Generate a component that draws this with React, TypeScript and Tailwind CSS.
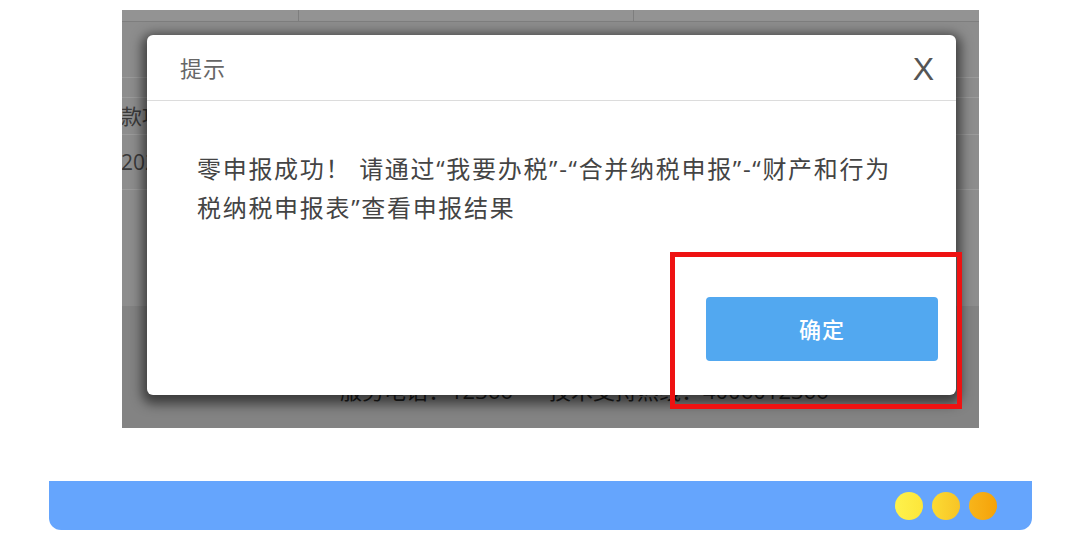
export default function App() {
  return (
    <div className="w-[1080px] h-[547px] bg-white overflow-hidden font-['Open_Sans','Noto_Sans_CJK_SC',sans-serif]">
      <div className="pt-[10px] pl-[122px]">
        <div className="relative w-[857px] h-[418px] bg-[#8d8d8d] overflow-hidden">
          {/* page behind the overlay */}
          <div className="flex flex-col h-full">
            <div className="h-[12px] border-b border-[#7e7e7e] bg-[#939393] flex">
              <div className="w-[177px] border-r border-[#7e7e7e]" />
              <div className="w-[335px] border-r border-[#7e7e7e]" />
            </div>
            <div className="h-[56px] border-b border-[#9b9b9b]" />
            <div className="h-[20px] border-b border-[#9b9b9b]" />
            <div className="h-[37px] border-b border-[#9b9b9b] flex items-center text-[21px] text-[#3a3a3a] leading-none">
              <span className="-ml-[1px]">款项</span>
            </div>
            <div className="h-[55px] border-b border-[#9b9b9b] flex items-center text-[21px] text-[#3a3a3a] leading-none">
              <span className="-ml-[1px]">2022</span>
            </div>
            <div className="h-[116px]" />
            <div className="flex-1 bg-[#838383] pt-[73px] pl-[218px] text-[22px] leading-none text-[#1e1e1e] flex gap-[36px]">
              <span>服务电话：12366</span>
              <span>技术支持热线：4006012366</span>
            </div>
          </div>

          {/* modal */}
          <div className="absolute left-[25px] top-[25px] w-[809px] h-[360px] bg-white rounded-[6px] shadow-[0_4px_12px_5px_rgba(0,0,0,0.55)] flex flex-col">
            <div className="h-[66px] border-b border-[#dcdcdc] flex items-center justify-between pl-[33px] pr-[22px]">
              <span className="text-[22px] tracking-[1px] text-[#666] leading-none">提示</span>
              <span className="font-['Liberation_Sans',sans-serif] text-[32px] text-[#555] leading-none pt-[2px]">X</span>
            </div>
            <div className="flex-1 flex flex-col pl-[50px] pr-[18px]">
              <div className="pt-[48px] text-[24px] tracking-[1.7px] leading-[39px] text-[#444] whitespace-nowrap">
                <div>零申报成功！ 请通过“我要办税”-“合并纳税申报”-“财产和行为</div>
                <div>税纳税申报表”查看申报结果</div>
              </div>
              <div className="flex justify-end mt-[70px]">
                <button className="w-[232px] h-[64px] rounded-[4px] bg-[#52a8f0] text-white text-[22px] tracking-[1px] font-medium">
                  确定
                </button>
              </div>
            </div>
          </div>

          {/* highlight box */}
          <div className="absolute left-[548px] top-[242px] w-[292px] h-[157px] border-[5px] border-[#ee1212]" />
        </div>
      </div>

      <div className="mt-[53px] ml-[49px] w-[983px] h-[49px] bg-[#65a5fd] rounded-b-[12px] flex items-center justify-end pr-[35px] gap-[9px]">
        <div className="w-[28px] h-[28px] rounded-full bg-gradient-to-r from-[#fef24c] to-[#fde63a]" />
        <div className="w-[28px] h-[28px] rounded-full bg-gradient-to-r from-[#fcdb33] to-[#f8c426]" />
        <div className="w-[28px] h-[28px] rounded-full bg-gradient-to-r from-[#f8b51a] to-[#f5a207]" />
      </div>
    </div>
  );
}
